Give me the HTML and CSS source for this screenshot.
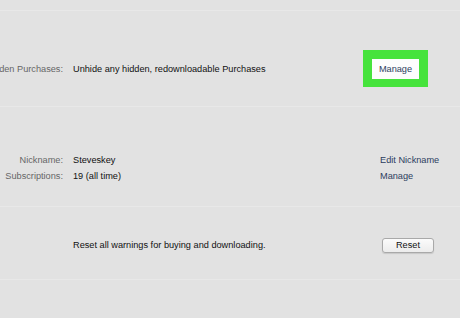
FILE: index.html
```html
<!DOCTYPE html>
<html>
<head>
<meta charset="utf-8">
<link rel="stylesheet" href="styles.css">
</head>
<body>
<div class="top"></div>
<section class="sec sec-hidden">
  <div class="row">
    <div class="label"><span>Hidden Purchases:</span></div>
    <div class="value">Unhide any hidden, redownloadable Purchases</div>
    <div class="action">
      <div class="highlight"><span class="btn-white">Manage</span></div>
    </div>
  </div>
</section>
<section class="sec sec-account">
  <div class="row row-line">
    <div class="label"><span>Nickname:</span></div>
    <div class="value">Steveskey</div>
    <div class="action links"><span class="link">Edit Nickname</span></div>
  </div>
  <div class="row row-line">
    <div class="label"><span>Subscriptions:</span></div>
    <div class="value">19 (all time)</div>
    <div class="action links"><span class="link">Manage</span></div>
  </div>
</section>
<section class="sec sec-reset">
  <div class="row row-line">
    <div class="label"></div>
    <div class="value">Reset all warnings for buying and downloading.</div>
    <div class="action reset-cell"><span class="btn-reset">Reset</span></div>
  </div>
</section>
<section class="sec sec-bottom"></section>
</body>
</html>
```
FILE: styles.css
```css
html, body {
  margin: 0;
  padding: 0;
  background: #e2e2e2;
  font-family: "Liberation Sans", Arial, Helvetica, sans-serif;
  font-size: 9.2px;
  color: #161616;
  width: 460px;
  height: 318px;
  overflow: hidden;
}
.top { height: 10px; }
.sec {
  border-top: 1px solid #e8e8e8;
  box-sizing: border-box;
}
.sec-hidden { height: 96px; padding-top: 39px; }
.sec-account { height: 100px; padding-top: 45px; }
.sec-reset { height: 73px; padding-top: 30px; }
.sec-bottom { height: 39px; }
.row {
  display: grid;
  grid-template-columns: 63px 1fr 97px;
  column-gap: 10px;
  align-items: center;
}
.row-line { height: 16px; }
.label {
  display: flex;
  justify-content: flex-end;
  white-space: nowrap;
  color: #666;
}
.value { white-space: nowrap; color: #111; }
.highlight {
  width: 65px;
  height: 37px;
  box-sizing: border-box;
  background: #46e33c;
  padding: 9px 9px 8px 9px;
}
.btn-white {
  display: flex;
  align-items: center;
  justify-content: center;
  height: 20px;
  background: #fdfdfd;
  color: #2c3d5e;
}
.links { padding-left: 17px; }
.link { color: #2c3d5e; white-space: nowrap; }
.reset-cell { padding-left: 19px; }
.btn-reset {
  display: flex;
  align-items: center;
  justify-content: center;
  width: 52px;
  height: 15px;
  box-sizing: border-box;
  border: 1px solid #a9a9a9;
  border-radius: 3px;
  background: linear-gradient(#fbfbfb, #ececec);
  box-shadow: 0 1px 1px rgba(0,0,0,0.12);
  color: #111;
}
```
